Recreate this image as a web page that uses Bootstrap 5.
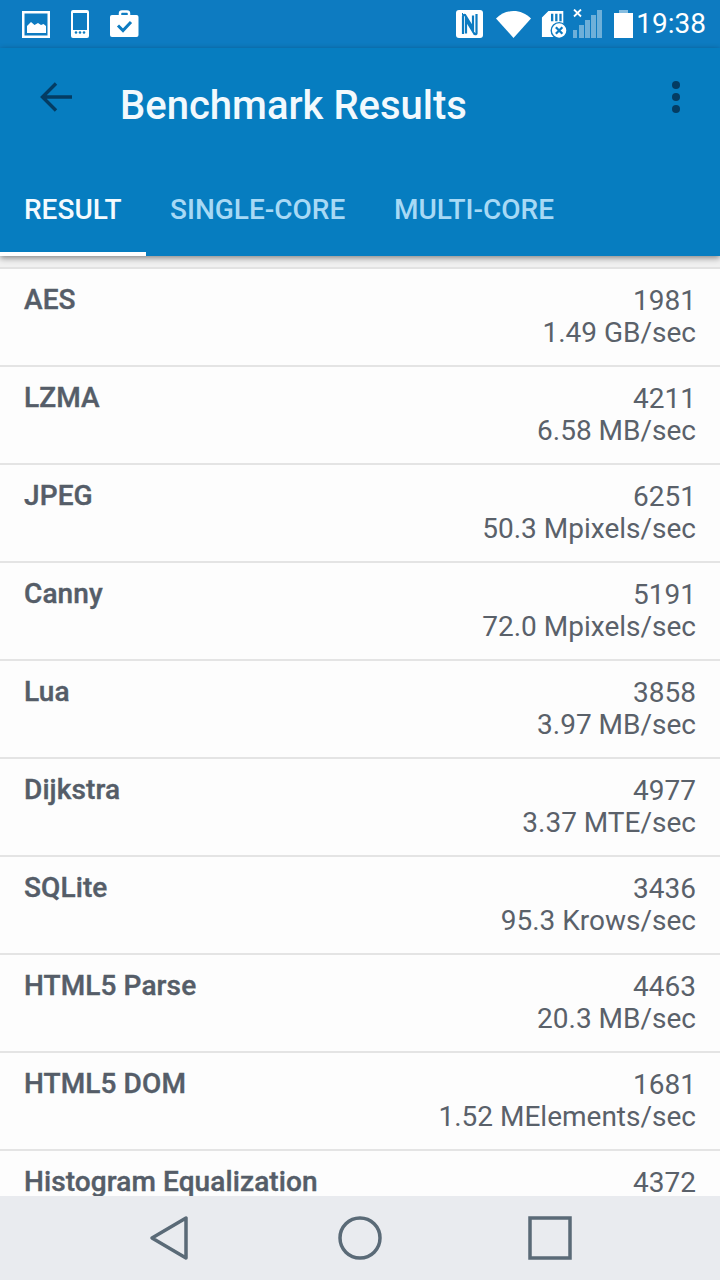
<!DOCTYPE html>
<html lang="en"><head><meta charset="utf-8"><title>Benchmark Results</title>
<link href="https://cdn.jsdelivr.net/npm/bootstrap@5.3.0/dist/css/bootstrap.min.css" rel="stylesheet">
<style>
html,body{margin:0;height:1280px;overflow:hidden}
body{font-family:Roboto,"Liberation Sans",sans-serif;background:#fdfdfd;color:#575f69}
.phone{width:720px;height:1280px}
.sbar{height:48px;background:#0d7bc1;padding:0 14px 0 22px;color:#fff}
.clock{font-size:28px;line-height:48px;margin-left:3px}
.appbar{background:#067dc0;height:208px;box-shadow:0 2px 6px rgba(0,0,0,.45);position:relative;z-index:2}
.ttl-row{height:112px;padding:0 0 0 40px}
.ttl{font-size:40px;font-weight:500;color:#f2f9fd;margin-left:48px;line-height:1;padding-top:3px}
.kebab{margin-right:40px;margin-top:-14px}
.backa{margin-top:-14px}
.tabrow{height:96px}
.tabx{font-size:28px;font-weight:500;color:#a7d9f5;padding:0 24px;height:96px;line-height:100px}
.tabx.on{color:#f3fafe;border-bottom:4px solid #fff;width:146px}
.tabx.t2{width:224px}
.gapz{background:#f0f0f0;border-bottom:2px solid #e2e2e2;height:14px}
.scroller{flex:1 1 auto;overflow:hidden;min-height:0}
.rowz{height:98px;border-bottom:2px solid #e4e4e4;padding:16px 24px 0;font-size:28px;line-height:32px;background:#fdfdfd}
.nm{font-weight:500;color:#555d68;letter-spacing:.1px;-webkit-text-stroke:.4px #555d68;margin-top:-1px}
.vl{color:#5a616a;text-align:right}
.navb{height:84px;background:#e9ebef}
.navc{width:190px}
.ic1{margin-left:21px}
.tri{transform:translateX(1px)}
</style></head>
<body>
<div class="phone d-flex flex-column">
  <div class="sbar d-flex align-items-center justify-content-between">
    <div class="d-flex align-items-center">
      <svg width="28" height="28" viewBox="0 0 28 28" fill="#fff"><path fill-rule="evenodd" d="M0 1h28v27H0zM2.500 3.500v22h23v-22z"/><path d="M5 23v-7l4-4 3.500 3 3.500-2 3 2 2.500-1 2.500 2v7z"/></svg>
      <svg class="ic1" width="18" height="28" viewBox="0 0 18 28" fill="#fff"><path fill-rule="evenodd" d="M2 0h14a2 2 0 0 1 2 2v24a2 2 0 0 1-2 2H2a2 2 0 0 1-2-2V2a2 2 0 0 1 2-2zM2 3v17h14V3z"/><circle cx="5" cy="22.500" r="1.300" fill="#0d7bc1"/><circle cx="9" cy="22.500" r="1.300" fill="#0d7bc1"/><circle cx="13" cy="22.500" r="1.300" fill="#0d7bc1"/></svg>
      <svg class="ic1" width="29" height="28" viewBox="0 0 29 28"><path fill="none" stroke="#fff" stroke-width="2.500" d="M10 6V3.500a2 2 0 0 1 2-2h5a2 2 0 0 1 2 2V6"/><rect y="5" width="28.500" height="22" rx="2" fill="#fff"/><path d="M8 15.500l5 5 8-8.500" fill="none" stroke="#0d7bc1" stroke-width="3"/></svg>
    </div>
    <div class="d-flex align-items-center">
      <svg width="27" height="28" viewBox="0 0 27 28"><rect width="27" height="28" rx="3" fill="#fff"/><path d="M7 24V6.500q0-2 2-1.500l8 13V5.500M7 4h-1M20.500 4v19.500q0 1-2 0.500L10 10v13.500" fill="none" stroke="#0d7bc1" stroke-width="2.200"/></svg>
      <svg style="margin-left:13px" width="35" height="28" viewBox="0 0 35 28" fill="#fff"><path d="M0 8.500C5 3.500 11 1 17.500 1S30 3.500 35 8.500L17.500 28z"/></svg>
      <svg style="margin-left:10px" width="26" height="28" viewBox="0 0 28 30"><path d="M8 1h16v20H16v8H1V8z" fill="#fff"/><path d="M12 4v8M16.500 4v8M21 4v8" stroke="#0d7bc1" stroke-width="2.500"/><circle cx="19.500" cy="22" r="8.500" fill="#fff" stroke="#0d7bc1" stroke-width="1.500"/><path d="M16 18.500l7 7m0-7l-7 7" stroke="#0d7bc1" stroke-width="2.500"/></svg>
      <svg style="margin-left:6px" width="30" height="30" viewBox="0 0 30 30" fill="#fff"><path d="M1 0.500l7 7m0-7l-7 7" stroke="#fff" stroke-width="1.800"/><g opacity=".4"><rect x="0" y="21" width="4" height="8"/><rect x="6" y="16" width="5" height="13"/><rect x="12" y="11" width="5" height="18"/><rect x="18" y="6" width="5" height="23"/><rect x="24" y="1" width="5" height="28"/></g></svg>
      <svg style="margin-left:11px" width="19" height="28" viewBox="0 0 19 28"><rect x="5" width="9" height="3" fill="#fff" opacity=".5"/><rect y="3" width="19" height="25" fill="#fff"/></svg>
      <span class="clock">19:38</span>
    </div>
  </div>
  <div class="appbar">
    <div class="ttl-row d-flex align-items-center">
      <svg class="backa" width="32" height="30" viewBox="0 0 32 30"><path d="M32 15H3M16 1.500L2.500 15 16 28.500" fill="none" stroke="#043c63" stroke-width="3.400"/></svg>
      <div class="ttl flex-grow-1">Benchmark Results</div>
      <svg class="kebab" width="8" height="32" viewBox="0 0 8 32" fill="#043c63"><circle cx="4" cy="4" r="4"/><circle cx="4" cy="16" r="4"/><circle cx="4" cy="28" r="4"/></svg>
    </div>
    <div class="tabrow d-flex">
      <div class="tabx on">RESULT</div>
      <div class="tabx t2">SINGLE-CORE</div>
      <div class="tabx">MULTI-CORE</div>
    </div>
  </div>
  <div class="gapz"></div>
  <div class="scroller">
    <div class="rowz d-flex justify-content-between"><div class="nm">AES</div><div class="vl">1981<br>1.49 GB/sec</div></div>
    <div class="rowz d-flex justify-content-between"><div class="nm">LZMA</div><div class="vl">4211<br>6.58 MB/sec</div></div>
    <div class="rowz d-flex justify-content-between"><div class="nm">JPEG</div><div class="vl">6251<br>50.3 Mpixels/sec</div></div>
    <div class="rowz d-flex justify-content-between"><div class="nm">Canny</div><div class="vl">5191<br>72.0 Mpixels/sec</div></div>
    <div class="rowz d-flex justify-content-between"><div class="nm">Lua</div><div class="vl">3858<br>3.97 MB/sec</div></div>
    <div class="rowz d-flex justify-content-between"><div class="nm">Dijkstra</div><div class="vl">4977<br>3.37 MTE/sec</div></div>
    <div class="rowz d-flex justify-content-between"><div class="nm">SQLite</div><div class="vl">3436<br>95.3 Krows/sec</div></div>
    <div class="rowz d-flex justify-content-between"><div class="nm">HTML5 Parse</div><div class="vl">4463<br>20.3 MB/sec</div></div>
    <div class="rowz d-flex justify-content-between"><div class="nm">HTML5 DOM</div><div class="vl">1681<br>1.52 MElements/sec</div></div>
    <div class="rowz d-flex justify-content-between"><div class="nm">Histogram Equalization</div><div class="vl">4372</div></div>
  </div>
  <div class="navb d-flex align-items-center justify-content-center flex-shrink-0">
    <div class="navc text-center"><svg class="d-block mx-auto tri" width="44" height="46" viewBox="0 0 44 46"><path d="M37 3v40L3 23z" fill="none" stroke="#5a6a77" stroke-width="3.500" stroke-linejoin="round"/></svg></div>
    <div class="navc text-center"><svg class="d-block mx-auto" width="44" height="44" viewBox="0 0 44 44"><circle cx="22" cy="22" r="20" fill="none" stroke="#5a6a77" stroke-width="3.500"/></svg></div>
    <div class="navc text-center"><svg class="d-block mx-auto" width="44" height="44" viewBox="0 0 44 44"><rect x="2" y="2" width="40" height="40" fill="none" stroke="#5a6a77" stroke-width="3.500"/></svg></div>
  </div>
</div>
</body></html>
